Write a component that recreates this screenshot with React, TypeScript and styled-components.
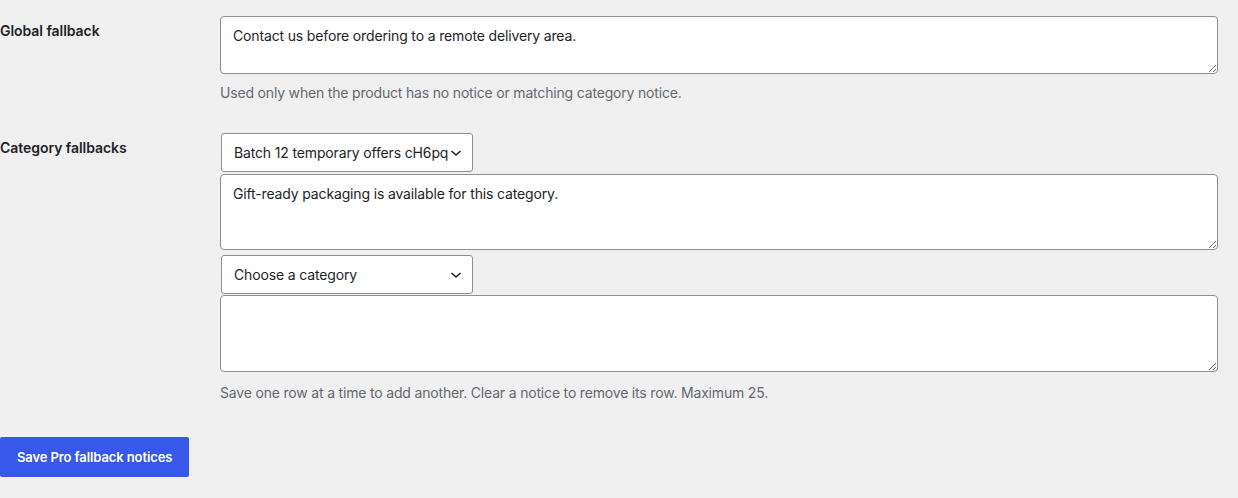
import React from 'react';
import styled, { createGlobalStyle } from 'styled-components';

const GlobalStyle = createGlobalStyle`
  html, body {
    margin: 0;
    padding: 0;
    background: #f0f0f1;
  }
  body {
    font-family: Inter, "Noto Sans", "Liberation Sans", sans-serif;
    color: #1d2327;
    font-size: 14px;
  }
`;

const Page = styled.div`
  padding: 0 20px 0 0;
`;

const FormTable = styled.div`
  display: flex;
  flex-direction: column;
`;

const Row = styled.div`
  display: grid;
  grid-template-columns: 220px 1fr;
`;

const Label = styled.div<{ $top: number }>`
  padding-top: ${(p) => p.$top}px;
  font-weight: 600;
  font-size: 14px;
  line-height: 18px;
  letter-spacing: -0.05px;
  color: #1d2327;
`;

const Field = styled.div<{ $top: number }>`
  display: flex;
  flex-direction: column;
  align-items: flex-start;
  padding: ${(p) => p.$top}px 0 15px;
`;

const TextArea = styled.textarea<{ $h: number; $gap?: number }>`
  box-sizing: border-box;
  width: 100%;
  height: ${(p) => p.$h}px;
  margin: 0 0 ${(p) => p.$gap ?? 0}px;
  padding: 9px 12px;
  border: 1px solid #8c8f94;
  border-radius: 4px;
  background: #fff;
  font-family: inherit;
  font-size: 14px;
  line-height: 20px;
  letter-spacing: -0.15px;
  color: #1d2327;
  resize: vertical;
  outline: none;
`;

const Select = styled.div<{ $gap?: number }>`
  box-sizing: border-box;
  display: flex;
  align-items: center;
  width: 252px;
  height: 39px;
  margin: 0 0 ${(p) => p.$gap ?? 0}px 1px;
  padding: 0 10px 0 12px;
  border: 1px solid #8c8f94;
  border-radius: 3px;
  background: #fff;
  font-size: 14px;
  letter-spacing: -0.15px;
  color: #1d2327;
`;

const SelectText = styled.span`
  flex: 1;
  min-width: 0;
  white-space: nowrap;
`;

const Chevron = styled.svg`
  flex: none;
  width: 12px;
  height: 8px;
  margin-left: 1px;
`;

const Description = styled.p<{ $top: number }>`
  margin: ${(p) => p.$top}px 0 0;
  font-size: 14px;
  line-height: 20px;
  letter-spacing: -0.18px;
  color: #646970;
`;

const Submit = styled.div`
  padding-top: 19px;
`;

const Button = styled.button`
  height: 40px;
  padding: 0 17px;
  border: none;
  border-radius: 2px;
  background: #3858e9;
  color: #fff;
  font-family: inherit;
  font-size: 13px;
  font-weight: 600;
  letter-spacing: -0.1px;
  cursor: pointer;
`;

const CategorySelect = ({ text, gap }: { text: string; gap?: number }) => (
  <Select $gap={gap}>
    <SelectText>{text}</SelectText>
    <Chevron viewBox="0 0 12 8">
      <path d="M1.5 2 L6 6 L10.5 2" fill="none" stroke="#1d2327" strokeWidth="1.6" />
    </Chevron>
  </Select>
);

export default function App() {
  return (
    <Page>
      <GlobalStyle />
      <FormTable>
        <Row>
          <Label $top={22}>Global fallback</Label>
          <Field $top={16}>
            <TextArea
              $h={58}
              defaultValue="Contact us before ordering to a remote delivery area."
            />
            <Description $top={9}>
              Used only when the product has no notice or matching category notice.
            </Description>
          </Field>
        </Row>
        <Row>
          <Label $top={21}>Category fallbacks</Label>
          <Field $top={15}>
            <CategorySelect text="Batch 12 temporary offers cH6pq" gap={2} />
            <TextArea
              $h={76}
              $gap={5}
              defaultValue="Gift-ready packaging is available for this category."
            />
            <CategorySelect text="Choose a category" gap={1} />
            <TextArea $h={77} defaultValue="" />
            <Description $top={11}>
              Save one row at a time to add another. Clear a notice to remove its row. Maximum 25.
            </Description>
          </Field>
        </Row>
      </FormTable>
      <Submit>
        <Button type="button">Save Pro fallback notices</Button>
      </Submit>
    </Page>
  );
}
